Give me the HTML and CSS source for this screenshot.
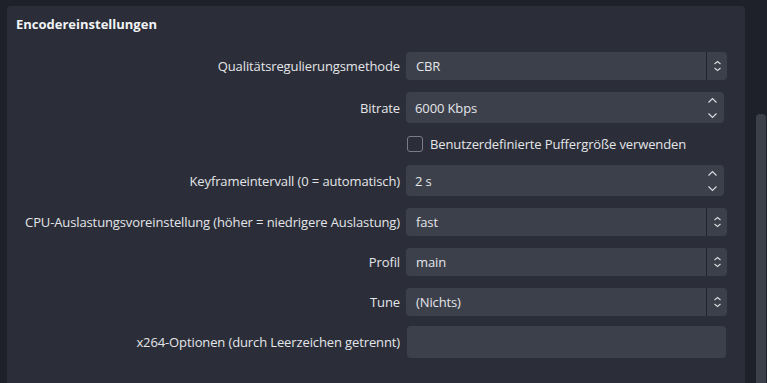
FILE: index.html
```html
<!DOCTYPE html>
<html lang="de">
<head>
<meta charset="utf-8">
<link rel="stylesheet" href="styles.css">
</head>
<body>
<div class="page">
  <div class="panel">
    <div class="title">Encodereinstellungen</div>
    <div class="form">
      <div class="row h28">
        <div class="label">Qualitätsregulierungsmethode</div>
        <div class="combo"><span class="val">CBR</span><span class="btn"><svg width="9" height="12" viewBox="0 0 9 12"><path d="M1.5 4 L4.5 1.5 L7.5 4 M1.5 8 L4.5 10.5 L7.5 8" fill="none" stroke="#d8d9dd" stroke-width="1.1"/></svg></span></div>
      </div>
      <div class="row h31">
        <div class="label">Bitrate</div>
        <div class="spin"><span class="val">6000 Kbps</span><span class="sbtn"><svg width="11" height="22" viewBox="0 0 11 22"><path d="M1.5 5.5 L5.5 1.5 L9.5 5.5 M1.5 16.5 L5.5 20.5 L9.5 16.5" fill="none" stroke="#d8d9dd" stroke-width="1.2"/></svg></span></div>
      </div>
      <div class="row h18">
        <div class="label"></div>
        <label class="check"><span class="box"></span><span>Benutzerdefinierte Puffergröße verwenden</span></label>
      </div>
      <div class="row h31">
        <div class="label">Keyframeintervall (0 = automatisch)</div>
        <div class="spin"><span class="val">2 s</span><span class="sbtn"><svg width="11" height="22" viewBox="0 0 11 22"><path d="M1.5 5.5 L5.5 1.5 L9.5 5.5 M1.5 16.5 L5.5 20.5 L9.5 16.5" fill="none" stroke="#d8d9dd" stroke-width="1.2"/></svg></span></div>
      </div>
      <div class="row h28">
        <div class="label">CPU-Auslastungsvoreinstellung (höher = niedrigere Auslastung)</div>
        <div class="combo"><span class="val">fast</span><span class="btn"><svg width="9" height="12" viewBox="0 0 9 12"><path d="M1.5 4 L4.5 1.5 L7.5 4 M1.5 8 L4.5 10.5 L7.5 8" fill="none" stroke="#d8d9dd" stroke-width="1.1"/></svg></span></div>
      </div>
      <div class="row h28">
        <div class="label">Profil</div>
        <div class="combo"><span class="val">main</span><span class="btn"><svg width="9" height="12" viewBox="0 0 9 12"><path d="M1.5 4 L4.5 1.5 L7.5 4 M1.5 8 L4.5 10.5 L7.5 8" fill="none" stroke="#d8d9dd" stroke-width="1.1"/></svg></span></div>
      </div>
      <div class="row h28">
        <div class="label">Tune</div>
        <div class="combo"><span class="val">(Nichts)</span><span class="btn"><svg width="9" height="12" viewBox="0 0 9 12"><path d="M1.5 4 L4.5 1.5 L7.5 4 M1.5 8 L4.5 10.5 L7.5 8" fill="none" stroke="#d8d9dd" stroke-width="1.1"/></svg></span></div>
      </div>
      <div class="row h32 last">
        <div class="label">x264-Optionen (durch Leerzeichen getrennt)</div>
        <div class="text"></div>
      </div>
    </div>
  </div>
  <div class="scroll"><div class="thumb"></div></div>
</div>
</body>
</html>
```

FILE: styles.css
```css
* { box-sizing: border-box; }
html, body { margin: 0; padding: 0; }
body {
  width: 767px;
  height: 383px;
  overflow: hidden;
  background: #1f212a;
  font-family: "Open Sans", "Noto Sans", sans-serif;
  font-size: 13px;
  letter-spacing: -0.12px;
  color: #e4e5e9;
}
.page {
  display: flex;
  height: 383px;
  padding: 6px 0 0 7px;
}
.panel {
  width: 738px;
  height: 377px;
  background: #2b2e38;
  border-radius: 4px 4px 0 0;
  padding: 10px 0 0 9px;
}
.title {
  font-weight: 700;
  font-size: 13px;
  letter-spacing: 0;
  color: #f2f3f5;
  line-height: 16px;
}
.form {
  display: flex;
  flex-direction: column;
  gap: 12px;
  margin-top: 20px;
}
.row {
  display: flex;
  align-items: center;
  gap: 6px;
}
.h28 { height: 28px; }
.h31 { height: 31px; }
.h18 { height: 18px; }
.h32 { height: 32px; }
.last { margin-top: -2px; }
.label {
  width: 384px;
  text-align: right;
  white-space: nowrap;
}
.combo {
  width: 321px;
  height: 28px;
  background: #3c404b;
  border-radius: 4px;
  display: flex;
  align-items: center;
  justify-content: space-between;
}
.combo .val { padding-left: 10px; }
.combo .btn {
  width: 21px;
  height: 28px;
  border-left: 1px solid #22242c;
  display: flex;
  align-items: center;
  justify-content: center;
}
.spin {
  width: 318px;
  height: 31px;
  background: #3c404b;
  border-radius: 4px;
  display: flex;
  align-items: center;
  justify-content: space-between;
}
.spin .val { padding-left: 9px; }
.spin .sbtn {
  width: 24px;
  display: flex;
  align-items: center;
  justify-content: center;
}
.check {
  display: flex;
  align-items: center;
  gap: 7px;
  padding-left: 1px;
}
.box {
  width: 16px;
  height: 16px;
  border: 1px solid #7a7d87;
  border-radius: 3px;
}
.text {
  width: 319px;
  height: 32px;
  margin-left: 1px;
  background: #3c404b;
  border-radius: 4px;
}
.scroll {
  margin-left: 11px;
  padding-top: 108px;
}
.thumb {
  width: 10px;
  height: 269px;
  background: #3c404b;
  border-radius: 4px 4px 0 0;
}
```
